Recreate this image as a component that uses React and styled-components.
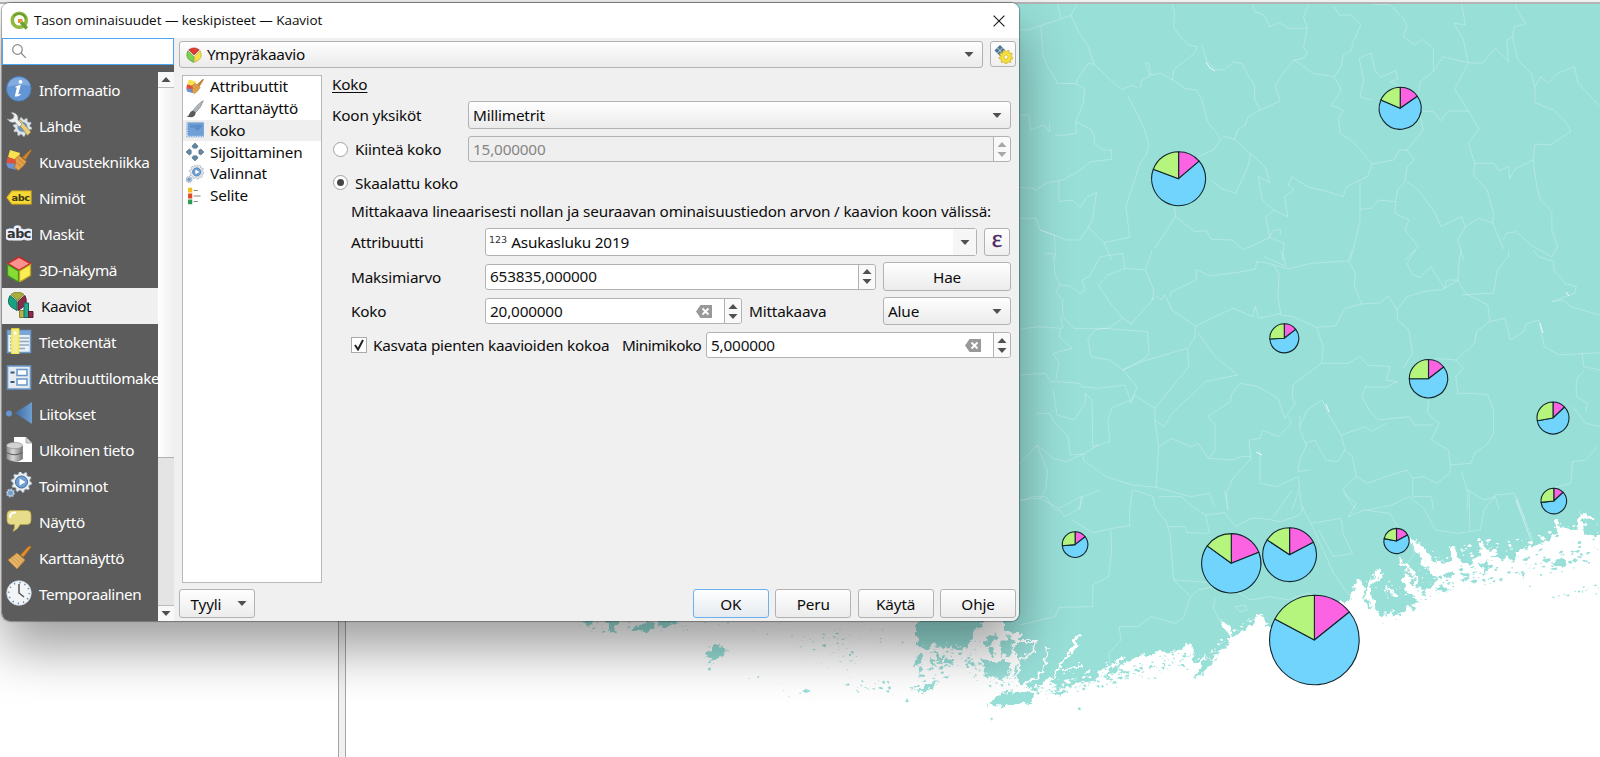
import React from 'react';
import styled, { createGlobalStyle, css } from 'styled-components';

const GlobalStyle = createGlobalStyle`
  * { box-sizing: border-box; }
  html, body { margin: 0; height: 100%; overflow: hidden; background: #fff; }
  body { font-family: "Noto Sans", "Open Sans", sans-serif; font-size: 15.3px; letter-spacing: -0.18px; color: #0c0c0c; }
`;

const Desktop = styled.div`
  position: relative;
  display: flex;
  flex-direction: column;
  width: 1600px;
  height: 757px;
  overflow: hidden;
`;
const TopStrip = styled.div`
  flex: none;
  height: 4px;
  background: #f0f0f0;
  border-bottom: 2px solid #b3b5b5;
`;
const Workspace = styled.div`
  flex: 1;
  min-height: 0;
  display: flex;
`;
const LayerPanel = styled.div`
  width: 338px;
  background: #fff;
`;
const Splitter = styled.div`
  width: 8px;
  background: #f0f0f0;
  border: solid #a5a5a5;
  border-width: 0 1px;
`;
const MapSvg = styled.svg`
  display: block;
  width: 1254px;
  height: 753px;
`;

const Dialog = styled.section`
  position: absolute;
  left: 2px;
  top: 3px;
  width: 1017px;
  height: 618px;
  display: flex;
  flex-direction: column;
  background: #f0f0f0;
  border-radius: 8px;
  overflow: hidden;
`;
const DialogShadow = styled.div`
  position: absolute;
  left: 2px;
  top: 3px;
  width: 1017px;
  height: 618px;
  border-radius: 8px;
  box-shadow: 0 28px 52px rgba(0, 0, 0, 0.38), 0 0 1px 1px rgba(0, 0, 0, 0.32);
`;
const TitleBar = styled.header`
  flex: none;
  height: 35px;
  display: flex;
  align-items: center;
  padding: 0 14px 0 8px;
  background: #fff;
  font-family: "Open Sans", sans-serif;
  font-size: 13.5px;
  letter-spacing: -0.04px;
  white-space: nowrap;
`;
const TitleText = styled.span`
  flex: 1;
  margin: -2px 0 0 5px;
`;
const DialogBody = styled.div`
  flex: 1;
  min-height: 0;
  display: flex;
`;

const Sidebar = styled.nav`
  width: 172px;
  display: flex;
  flex-direction: column;
  background: #5c5c5c;
`;
const SearchBox = styled.div`
  flex: none;
  height: 27px;
  display: flex;
  align-items: center;
  padding: 0 0 2px 8px;
  background: #fff;
  border: 1px solid #4aa5f3;
`;
const SidebarMain = styled.div`
  flex: 1;
  min-height: 0;
  display: flex;
  margin-top: 7px;
`;
const PageList = styled.ul`
  width: 156px;
  margin: 0;
  padding: 0;
  list-style: none;
  overflow: hidden;
  letter-spacing: -0.42px;
`;
const PageItem = styled.li`
  height: 36px;
  display: flex;
  align-items: center;
  gap: 7px;
  padding-left: ${(p) => (p.$selected ? 6 : 4)}px;
  white-space: nowrap;
  color: ${(p) => (p.$selected ? '#111' : '#fff')};
  background: ${(p) => (p.$selected ? '#f0f0f0' : 'transparent')};
  svg { flex: none; margin-bottom: 2px; }
`;
const ScrollBar = styled.div`
  width: 16px;
  display: flex;
  flex-direction: column;
  background: #e4e4e4;
`;
const ScrollButton = styled.div`
  height: 16px;
  display: flex;
  align-items: center;
  justify-content: center;
  background: #f8f8f8;
  border: solid #bcbcbc;
  border-width: ${(p) => (p.$end ? '1px 0 0' : '0 0 1px')};
`;
const ScrollThumb = styled.div`
  height: 370px;
  background: linear-gradient(90deg, #fff, #efefef);
  border-bottom: 1px solid #b0b0b0;
`;
const ScrollTrack = styled.div`
  flex: 1;
`;

const Content = styled.main`
  flex: 1;
  display: flex;
  flex-direction: column;
  padding: 3px 3px 3px 5px;
`;
const RendererRow = styled.div`
  flex: none;
  display: flex;
  gap: 7px;
  height: 27px;
`;
const fieldFrame = css`
  display: flex;
  align-items: center;
  border: 1px solid #b2b2b2;
  border-radius: 3px;
  white-space: nowrap;
`;
const Combo = styled.div`
  ${fieldFrame}
  width: ${(p) => p.$w}px;
  height: ${(p) => p.$h || 28}px;
  padding: 0 8px 0 ${(p) => p.$pad || 4}px;
  gap: 5px;
  background: ${(p) => (p.$editable ? '#fff' : 'linear-gradient(#fefefe, #ebebeb)')};
`;
const ComboText = styled.span`
  flex: 1;
  margin-top: -1px;
`;
const ComboArrowZone = styled.div`
  width: 23px;
  height: 100%;
  margin-right: -8px;
  display: flex;
  align-items: center;
  justify-content: center;
  background: #f6f6f6;
`;
const ToolButton = styled.div`
  ${fieldFrame}
  justify-content: center;
  width: ${(p) => p.$w || 26}px;
  height: ${(p) => p.$h || 28}px;
  background: linear-gradient(#fefefe, #efefef);
`;
const PushButton = styled.div`
  ${fieldFrame}
  justify-content: center;
  width: ${(p) => p.$w}px;
  height: 29px;
  background: ${(p) => (p.$default ? 'linear-gradient(#fefefe, #e4eaf0)' : 'linear-gradient(#fefefe, #ececec)')};
  border-color: ${(p) => (p.$default ? '#6bb1f0' : '#b2b2b2')};
`;
const SpinBox = styled.div`
  ${fieldFrame}
  width: ${(p) => p.$w}px;
  height: 26px;
  padding-left: 4px;
  color: ${(p) => (p.$disabled ? '#858585' : '#111')};
  background: ${(p) => (p.$disabled ? '#efefef' : '#fff')};
`;
const SpinValue = styled.span`
  flex: 1;
  margin-top: -1px;
`;
const SpinClear = styled.span`
  display: flex;
  margin-right: 12px;
`;
const SpinArrows = styled.div`
  width: 17px;
  height: 100%;
  display: flex;
  flex-direction: column;
  align-items: center;
  justify-content: center;
  gap: 5px;
  background: #f9f9f9;
  border-left: 1px solid #b2b2b2;
  border-radius: 0 3px 3px 0;
`;

const Columns = styled.div`
  flex: 1;
  min-height: 0;
  display: flex;
  padding: 7px 0 0 3px;
`;
const TabList = styled.ul`
  width: 140px;
  height: 508px;
  margin: 0;
  padding: 0;
  list-style: none;
  background: #fff;
  border: 1px solid #b9b9b9;
`;
const TabItem = styled.li`
  height: 21.75px;
  display: flex;
  align-items: center;
  gap: 6px;
  padding-left: 3px;
  background: ${(p) => (p.$selected ? '#efefef' : 'transparent')};
`;
const TabText = styled.span`
  margin-top: -1px;
`;
const Form = styled.div`
  flex: 1;
  padding-left: 10px;
`;
const FormRow = styled.div`
  display: flex;
  align-items: center;
  height: ${(p) => p.$h}px;
  margin-top: ${(p) => p.$gap || 0}px;
  padding-left: ${(p) => p.$indent || 0}px;
  white-space: nowrap;
`;
const Label = styled.label`
  width: ${(p) => (p.$w ? `${p.$w}px` : 'auto')};
  letter-spacing: ${(p) => (p.$ls ? `${p.$ls}px` : 'inherit')};
`;
const Heading = styled.span`
  margin-top: -3px;
  text-decoration: underline;
  text-underline-offset: 2px;
  text-decoration-thickness: 1px;
`;
const Gap = styled.span`
  width: ${(p) => p.$w}px;
`;
const Radio = styled.span`
  width: 15px;
  height: 15px;
  margin: 0 7px 0 1px;
  display: flex;
  align-items: center;
  justify-content: center;
  background: #fff;
  border: 1px solid #a2a2a2;
  border-radius: 50%;
  &::after {
    content: '';
    width: 7px;
    height: 7px;
    border-radius: 50%;
    background: ${(p) => (p.$checked ? '#444' : 'transparent')};
  }
`;
const CheckBox = styled.span`
  width: 16px;
  height: 16px;
  margin-right: 6px;
  display: flex;
  align-items: center;
  justify-content: center;
  background: #fff;
  border: 1px solid #aaa;
`;
const TypeTag = styled.span`
  font-family: "DejaVu Sans", sans-serif;
  font-size: 9.5px;
  letter-spacing: 0;
  margin: -5px -1px 0 -1px;
  color: #333;
`;
const Epsilon = styled.span`
  font-family: "Liberation Serif", serif;
  font-size: 25px;
  line-height: 20px;
  margin-top: -6px;
  color: #4c2a63;
  -webkit-text-stroke: 0.4px #4c2a63;
`;
const Footer = styled.footer`
  display: flex;
  gap: 6.4px;
  height: 29px;
`;
const Spacer = styled.span`
  flex: 1;
`;

/* ---------- small glyphs ---------- */

const Down = ({ c = '#505050' }) => (
  <svg width="10" height="5" viewBox="0 0 10 5"><path d="M.5 0h9L5 5z" fill={c} /></svg>
);
const Up = ({ c = '#505050' }) => (
  <svg width="10" height="5" viewBox="0 0 10 5"><path d="M.5 5h9L5 0z" fill={c} /></svg>
);
const Clear = () => (
  <svg width="16" height="13" viewBox="0 0 16 13">
    <path d="M0 6.5 4.5 0H16v13H4.5z" fill="#999" />
    <path d="m6.5 3.5 6 6m0-6-6 6" stroke="#fff" strokeWidth="1.8" />
  </svg>
);
const Spin = ({ w, value, disabled, clear }) => (
  <SpinBox $w={w} $disabled={disabled}>
    <SpinValue>{value}</SpinValue>
    {clear && <SpinClear><Clear /></SpinClear>}
    <SpinArrows>
      <Up c={disabled ? '#a8a8a8' : undefined} />
      <Down c={disabled ? '#a8a8a8' : undefined} />
    </SpinArrows>
  </SpinBox>
);

/* ---------- icons ---------- */

const gearPath = (cx, cy, ro, ri, n) => {
  const pts = [];
  for (let i = 0; i < n * 4; i += 1) {
    const a = ((i + 0.5) / (n * 4)) * Math.PI * 2;
    const r = i % 4 < 2 ? ro : ri;
    pts.push(`${(cx + r * Math.cos(a)).toFixed(2)},${(cy + r * Math.sin(a)).toFixed(2)}`);
  }
  return `M${pts.join('L')}z`;
};

const Brush = () => (
  <>
    <path d="m4 1 10 3-2 8-10-4z" fill="#f9e04f" />
    <path d="m1.500 8 10 3-1 6-10-3z" fill="#e0523c" />
    <path d="m0 14 10 1 1 6-9-2z" fill="#6a93cf" />
    <path d="m9 10 4-3.500 7.500 6-3 4.500-5 4.500-4-3q2-4 .5-8.500z" fill="#e3a24b" stroke="#a86a22" strokeWidth=".7" />
    <path d="m11.500 9 6.500 6M10.500 13l4.500 4.500" stroke="#b97a2c" strokeWidth=".8" />
    <path d="m16 8.500 8.500-8 1 1-6 9.500z" fill="#c98331" stroke="#9a5d18" strokeWidth=".5" />
  </>
);
const ActionGear = () => (
  <>
    <path d={gearPath(15.500, 10, 10.500, 8.500, 10)} fill="#eceff2" stroke="#8b98a5" strokeWidth=".8" />
    <circle cx="15.500" cy="10" r="6" fill="#6f9fd3" stroke="#3e6c9f" />
    <path d="m13.500 6.500 6 3.500-6 3.500z" fill="#fff" />
    <path d={gearPath(4.500, 21, 4.600, 3.600, 8)} fill="#c8d3de" stroke="#75879a" strokeWidth=".6" />
    <circle cx="4.500" cy="21" r="2.500" fill="#6f9fd3" />
  </>
);
const Cube = ({ flip }) => (flip ? (
  <>
    <path d="M13 13 4.500 4.500q8.500-6 17 0z" fill="#e23a33" stroke="#9c201c" />
    <path d="M3 6q-4.500 10 2.500 15l6.500 4V15z" fill="#7ed34d" stroke="#3f9522" />
    <path d="M23 6q4.500 10-2.500 15L14 25V15z" fill="#f5e045" stroke="#b9a11b" />
  </>
) : (
  <>
    <path d="m13 1 11.500 6.500L13 14.500 1.500 7.500z" fill="#fb9290" stroke="#c22a28" strokeWidth="1.500" />
    <path d="m1.500 8.500 11 6.500v11L1.500 19.500z" fill="#86dc35" stroke="#3c9420" strokeWidth="1.300" />
    <path d="m24.500 8.500-11 6.500v11l11-6.500z" fill="#fbee55" stroke="#c0a41c" strokeWidth="1.300" />
  </>
));

const icons = {
  info: (
    <>
      <circle cx="12.800" cy="12.800" r="12.300" fill="#6495d4" stroke="#4d7fbd" />
      <path d="M2 11a11 9 0 0 1 22-1q-11-3-22 1z" fill="#82abdf" />
      <circle cx="14.500" cy="5.800" r="1.900" fill="#fff" />
      <path d="M9.500 10.500q3-1 5.300-1.400l-2.600 9.400 2.400-.8v1.300q-3.300 2-5.800 1.400l2-8.800-1.300-.1z" fill="#fff" />
    </>
  ),
  source: (
    <>
      <path d={gearPath(16.500, 15, 9.500, 7.500, 10)} fill="#dfe4ea" stroke="#9aa5b0" strokeWidth=".6" />
      <circle cx="16.500" cy="15" r="5" fill="#6c97cb" />
      <path d="m11 10 3-2.500L25 20l-3.500 3.500z" fill="#e8cf7f" stroke="#8e7a37" strokeWidth=".7" />
      <path d="M1 7q4 5 8 3l4 5 3-3-4-4q1-6-5-7.500L5 .5l3 3-1 3-3 1z" fill="#eef0f1" stroke="#8b9093" strokeWidth=".7" />
    </>
  ),
  brush: <g transform="translate(0 1)"><Brush /></g>,
  label: (
    <>
      <path d="M1 13.500 6 7h19v13H6z" fill="#f6d935" stroke="#e0b71f" strokeWidth="1.200" />
      <text x="5.500" y="17" fontFamily="DejaVu Sans" fontWeight="700" fontSize="8.600" fill="#3c3510" textLength="18" lengthAdjust="spacingAndGlyphs">abc</text>
    </>
  ),
  mask: (
    <text x="1" y="17.500" fontFamily="DejaVu Sans" fontWeight="700" fontSize="12.500" fill="#333" stroke="#e9eefa" strokeWidth="5" strokeLinejoin="round" paintOrder="stroke" textLength="24" lengthAdjust="spacingAndGlyphs">abc</text>
  ),
  cube: <Cube />,
  diagram: (
    <>
      <path d="m9.500 8.500-6.500-6q6.500-5 13 0z" fill="#a9ad3c" stroke="#7f8428" />
      <path d="M2 3.500q-4 8 2 12l5 3V9.500z" fill="#16a381" stroke="#0d6d59" />
      <path d="M17 3.500q3.500 8-2.500 12l-4.500 3V9.500z" fill="#8a2d49" stroke="#5f1b32" />
      <path d="M11.500 18.500h5v7h-5z" fill="#b8b546" stroke="#858327" />
      <path d="M16 11h4.500v14.500H16z" fill="#26a993" stroke="#156b60" />
      <path d="M20.500 19.500h4.500v6h-4.500z" fill="#8a2d49" stroke="#5f1b32" />
    </>
  ),
  fields: (
    <>
      <path d="M1.500 2.500h23v22h-23z" fill="#eaf1f8" stroke="#6a96ca" strokeWidth="1.500" />
      <path d="M2 3h22v4H2z" fill="#7ba6d8" />
      <path d="M4 10h19M4 13.500h19M4 17h19M4 20.500h15" stroke="#93a9bf" strokeWidth="1.300" />
      <path d="M6 1h6.500v25H6z" fill="#f1eaa5" stroke="#f7ee3d" strokeWidth="1.700" />
      <circle cx="9.200" cy="5" r="1.500" fill="#fff" />
    </>
  ),
  form: (
    <>
      <path d="M1.500 2h23v23h-23z" fill="#e6ebef" stroke="#6a96ca" strokeWidth="1.600" />
      <path d="M4.500 8.500h4M4.500 18h4" stroke="#38597c" strokeWidth="2" />
      <path d="M11 5.500h10v6H11zM11 15h10v6H11z" fill="#fff" stroke="#6a96ca" strokeWidth="1.500" />
    </>
  ),
  join: (
    <>
      <defs><linearGradient id="join"><stop stopColor="#3f6ca3" /><stop offset="1" stopColor="#6e9ed2" /></linearGradient></defs>
      <path d="M26 2v22L9 13z" fill="url(#join)" />
      <circle cx="3" cy="13.500" r="3" fill="#6495cf" />
    </>
  ),
  storage: (
    <>
      <path d="M8 1h12l6 6v19H8z" fill="#fff" />
      <path d="M20 1v6h6z" fill="#d3d3d3" stroke="#888" strokeWidth=".6" />
      <defs><linearGradient id="cyl"><stop stopColor="#8b8b8b" /><stop offset=".4" stopColor="#d9d9d9" /><stop offset="1" stopColor="#757575" /></linearGradient></defs>
      <path d="M.5 10v13q8 5 16 0V10z" fill="url(#cyl)" stroke="#6d6d6d" strokeWidth=".6" />
      <path d="M.5 16.500q8 4.500 16 0" fill="none" stroke="#595959" />
      <ellipse cx="8.500" cy="9.500" rx="8" ry="3.200" fill="#d2d2d2" stroke="#858585" strokeWidth=".6" />
    </>
  ),
  actions: <ActionGear />,
  display: (
    <>
      <path d="M5 2.500h16q4 0 4 4v6q0 4-4 4h-7q-2 5-7 7 2-4 1.500-7H5q-4 0-4-4v-6q0-4 4-4z" fill="#e7dc8a" stroke="#b7a548" strokeWidth=".8" />
      <path d="M4 9q0-4 5-4.500" fill="none" stroke="#fff" strokeWidth="2" strokeLinecap="round" />
    </>
  ),
  broom: (
    <>
      <path d="M14.500 11 22 3q3-2 3 0l-7.500 10z" fill="#e0912a" stroke="#b36a12" strokeWidth=".7" />
      <path d="m2 16 9-7 8 7-8 9z" fill="#e5b468" stroke="#b77e2c" strokeWidth=".8" />
      <path d="m9 10.500 9 8M7 12l8 8M5 14l8 8" stroke="#c98c3c" strokeWidth=".7" />
    </>
  ),
  clock: (
    <>
      <circle cx="13" cy="13" r="12.300" fill="#f2f4f6" stroke="#ccd2d8" strokeWidth=".7" />
      <circle cx="13" cy="13" r="10.300" fill="none" stroke="#5e87ba" strokeWidth="1.700" strokeDasharray="1.200 4.193" />
      <path d="M13 4v9l5 4" fill="none" stroke="#555" strokeWidth="1.500" />
    </>
  ),
  variables: <circle cx="13" cy="14" r="7" fill="#74307a" />,
  cubeRound: <Cube flip />,
  paint: (
    <>
      <path d="M25 1q-3 1-9 7l-6 7 4 3Q22 11 25 1z" fill="#aeb4b8" stroke="#6d7478" strokeWidth=".7" />
      <path d="M10 15q-4 1-5 5-1 3-4 4 8 2 11-1 2-2 2-5z" fill="#555b5e" />
    </>
  ),
  size: (
    <>
      <path d="M1 2h25v21H1z" fill="#6f9fd6" stroke="#9cb8d6" />
      <path d="M6 5q7 2 10 0l8 1-4 6-5 2-3-5-5 1z" fill="#5c8dc6" />
      <path d="M1.500 2v20.500H26" fill="none" stroke="#d3e2f2" strokeWidth="2.500" strokeDasharray="2 1.500" />
    </>
  ),
  move: (
    <g fill="#6487a5" stroke="#3c5c78" strokeWidth=".7">
      <path d="m13 0 4.500 4.500-2 3h-5l-2-3zM13 26l4.500-4.500-2-3h-5l-2 3zM0 13l4.500-4.500 3 2v5l-3 2zM26 13l-4.500-4.500-3 2v5l3 2z" />
    </g>
  ),
  legend: (
    <>
      <path d="M3 1h6v7H3z" fill="#f7bd1c" /><path d="M3 9.500h6v7H3z" fill="#dd4a25" /><path d="M3 18h6v7H3z" fill="#2c9b52" />
      <path d="M11 5h6M11 13h10M11 21h6" stroke="#888" strokeWidth="1.600" />
    </>
  ),
};
const Icon = ({ name, size = 26 }) => (
  <svg width={size} height={size} viewBox="0 0 26 26">{icons[name]}</svg>
);

const QgisLogo = () => (
  <svg width="19" height="19" viewBox="0 0 19 19">
    <circle cx="9.300" cy="9.300" r="7" fill="none" stroke="#8fb93c" strokeWidth="3.600" />
    <path d="M4 5A7 7 0 0 1 16 8" fill="none" stroke="#5c9330" strokeWidth="1.200" />
    <path d="m11 11 5.800 6.500" stroke="#6da12f" strokeWidth="3.400" />
    <path d="M8 8h4.500v1.500l-3 2.500H8z" fill="#ee8f2d" />
  </svg>
);
const CloseIcon = () => (
  <svg width="12" height="12" viewBox="0 0 12 12"><path d="m.6.6 10.800 10.800m0-10.800L.6 11.400" stroke="#222" strokeWidth="1.200" /></svg>
);
const SearchIcon = () => (
  <svg width="16" height="16" viewBox="0 0 16 16" fill="none" stroke="#888" strokeWidth="1.200">
    <circle cx="6.500" cy="6.500" r="4.800" /><path d="m10 10 4.800 4.800" />
  </svg>
);
const AutoIcon = () => (
  <svg width="19" height="19" viewBox="0 0 19 19">
    <path d="m6 0 5.500 5.500L6 11 .5 5.500z" fill="#4f7492" />
    <path d="m3.200 2.800 5.500 5.500M8.700 2.800 3.200 8.300" stroke="#d5e4f0" strokeWidth=".9" />
    <path d={gearPath(12, 12, 7, 5.300, 9)} fill="#f5df3c" stroke="#c9ab1b" strokeWidth=".7" />
    <circle cx="12" cy="12" r="2" fill="#fffbe0" stroke="#c9ab1b" strokeWidth=".6" />
  </svg>
);
const Check = () => (
  <svg width="12" height="12" viewBox="0 0 12 12"><path d="m2 6 3 4.500L10 1" fill="none" stroke="#222" strokeWidth="2" /></svg>
);

/* ---------- map ---------- */

const pies = [
  [1400.2, 108.3, 21, 55, 293.5], [1178.6, 178.7, 27, 49.6, 290.4], [1284.3, 338.3, 14.5, 52, 267],
  [1428.5, 378.7, 19.2, 52.4, 270], [1553, 418, 16, 46.6, 260], [1553.8, 501, 12.8, 47, 264],
  [1075.1, 544.6, 12.8, 52, 265], [1396.5, 541, 12.6, 61.5, 281], [1289.6, 554.7, 26.9, 62.6, 303.5],
  [1231.3, 563.3, 29.7, 68, 306], [1314.4, 640, 44.8, 51.3, 298],
];
const Pie = ({ d: [cx, cy, r, a, b] }) => {
  const at = (deg) => {
    const t = (deg * Math.PI) / 180;
    return [cx + r * Math.sin(t), cy - r * Math.cos(t)];
  };
  const slice = (s, e, fill) => {
    const [x1, y1] = at(s);
    const [x2, y2] = at(e);
    return <path d={`M${cx} ${cy}L${x1} ${y1}A${r} ${r} 0 ${e - s > 180 ? 1 : 0} 1 ${x2} ${y2}z`} fill={fill} />;
  };
  return (
    <g stroke="#12262c" strokeWidth="1.100" strokeLinejoin="round">
      {slice(0, a, '#fb63e3')}
      {slice(a, b, '#71d4fd')}
      {slice(b, 360, '#b5f57e')}
    </g>
  );
};

const bordersNorth = [
  'M26 90 48 90 82 77 162 46 178 12M127 12 135 53M162 46 180 90 208 140 223 193 296 269 325 256 340 265M82 77 88 165 98 195 122 240 124 250 175 251 178 240 208 190 223 193M175 251 198 265 195 310 175 365 176 400 145 406 120 405',
  'M175 365 215 388 223 405 225 432 248 450 270 450 270 478 215 485 180 515 140 540 100 548 68 570 60 565 26 562M130 543 130 605 165 600 187 622 205 590 230 578 220 655 208 682 250 728 318 712 308 620 325 560 345 490 360 468 370 435 357 388 340 345 313 288',
  'M430 12 437 35 435 82 452 110 475 135 498 140 490 160 468 180 450 195 435 210 432 240 400 220 375 225 368 187 360 190 372 228 350 240 345 265M432 240 465 265 495 270 510 300 520 345 528 370 550 400 560 420 540 450 500 470',
  'M510 135 522 180 545 208 570 210 595 185 618 192 635 232 650 255 650 300 665 330 633 350 625 375 605 390 597 418 640 463 632 500 600 580 560 565 535 540M597 418 565 408M665 330 718 303 705 258 725 220 755 180 780 175 790 158 780 140 790 85 740 85 715 68 690 80 675 45 650 35 645 12M790 85 780 50 795 12',
  'M755 180 805 220 862 230 880 200 885 165 908 152 910 130 932 75 905 45 875 45 862 20M862 230 880 268 870 290 853 315 885 330 873 360 878 400 912 425 962 492 1020 480 1035 450 1055 450 1098 390 1085 320',
  'M962 492 950 530 895 560 885 590 845 575 790 560 748 530 740 555 755 570 730 590 738 650 700 630 670 600 660 530 690 548 680 505 660 480 640 463M930 545 930 665 905 780M930 628 960 625 980 600 1025 605 1030 570 1050 545 1055 500 1075 480 1055 450',
  'M965 12 1010 15 1045 55 1055 80 1045 110 1075 135 1095 118 1125 145 1125 215 1090 245 1085 290M960 300 930 290 940 240 928 175 960 160 970 210 985 232 1025 212 1030 238 1010 245 1045 262',
  'M1125 215 1150 170 1218 188 1182 268 1218 333 1247 387 1218 430 1235 490 1285 490 1300 512 1325 500 1328 535 1345 505 1390 480 1395 432 1435 435 1490 395 1480 370 1445 330 1395 308 1395 260 1410 230 1430 250 1455 220 1500 200 1510 250 1568 320',
  'M1180 70 1210 75 1200 10M1180 70 1205 120 1218 188 1255 190 1290 145 1325 185 1320 120 1335 110 1340 80 1370 72 1345 25 1345 12M1335 110 1350 180 1385 220 1395 260M1095 333 1125 335 1145 362 1165 333 1218 333',
  'M1055 545 1085 570 1130 640 1145 680 1200 650 1210 680 1245 655 1283 670 1312 748M1235 490 1232 525 1268 570 1285 640 1283 670M1390 480 1400 560 1410 600 1440 635 1440 690 1455 740 1440 770 1390 740 1345 695 1320 700 1310 720M1210 680 1190 720 1205 780M1025 605 1022 640 1060 660 1050 690 1085 740 1050 780',
  'M437 620 440 650 385 745M440 650 490 695 522 692 535 718 590 720 620 750 690 712 728 730 725 780M690 712 680 650 700 630M690 712 700 690 720 690 718 705M26 655 70 655 80 690 118 705 122 780M80 690 150 720 185 720 208 682M250 728 270 780M26 345 50 345 55 390 90 375 105 395 105 370',
];
const bordersMid = [
  'M95 12 115 10 120 75 133 105 122 125 140 150 140 200 170 235 260 235 300 205 270 165 235 105 260 75 305 55 300 10M133 105 160 108 185 130 200 120 192 90 212 78 240 20 300 10M305 55 360 60 378 0M360 60 382 120 378 150 322 222 300 205M378 150 390 138 402 150 412 135 425 165 430 180 493 228 490 265 472 295 475 350 385 475 385 510 395 590 388 712',
  'M425 140 430 125 495 90 495 58 530 78 600 68 652 58 655 35 680 38 740 57 800 40 900 32 918 70 915 110 935 162 890 175 865 228 815 232 752 200 720 195 712 140 715 70 700 45M493 228 592 175 645 200 652 168 660 205 692 198 720 190M500 250 545 320 605 375 520 395 430 490 410 530 385 510',
  'M675 20 735 50 720 0M900 32 908 0M935 162 985 158 1005 138 1028 178 1030 210 1060 240 1070 310 1045 355M1028 178 1055 140 1100 125 1150 118 1190 90 1160 90 1155 115 1118 50 1090 82 1070 75 1055 40 1078 0M1190 90 1195 20 1200 0M1190 90 1210 130 1270 165 1275 215 1315 205 1330 270 1365 245 1372 222 1405 210 1420 290 1460 315 1568 308',
  'M1200 135 1265 130 1285 130 1295 60 1325 20 1325 0M1275 215 1240 245 1235 280 1185 330 1130 325M1185 330 1205 355 1185 380 1190 430 1230 430 1270 435 1285 480 1285 550 1270 580 1235 610 1225 640 1170 645 1165 600 1120 570 1140 520 1110 490 1112 450',
  'M1390 0 1405 20 1445 35 1445 60 1475 100 1505 110 1500 130 1440 155 1470 150 1490 170 1568 195M1520 308 1525 350 1568 360M1525 360 1505 390 1505 440 1535 460 1530 485M1495 470 1530 520 1568 530M1560 590 1530 630 1495 635 1490 700 1450 712',
  'M815 232 832 290 828 340 780 380 752 405 750 440 758 460 730 505 712 445 660 410 612 400 590 430 585 455 525 500 545 525 545 600 528 625 590 630 615 620 640 620M828 340 900 340 930 318 950 345 1010 350 1000 390 1030 395 1000 412 945 410 935 440 960 490 980 510 1060 500 1075 525 1125 525',
  'M740 500 748 520 712 560 670 540 665 565 635 570 640 625 590 690 575 730 578 780M770 495 770 540 788 585 770 630 765 665 795 660M785 580 810 570 840 630 870 635 890 600 880 555 845 490 830 450 790 480 770 530M880 555 920 540 945 530 960 545 1000 520M890 600 910 620 920 680 885 715 900 750 920 780M920 680 950 700 995 682 1055 660 1070 685 1100 680 1135 700 1170 668 1170 645',
  'M26 238 75 230 135 235 130 260 165 295 115 310 130 340 122 390M135 200 140 235M205 270 225 240 250 235 365 245 370 310 360 325 300 360 265 330 215 320 208 270M300 360 350 335 470 295M300 360 338 410 320 460 330 435 385 475M26 375 95 370 108 395 125 395 185 400 190 410 235 415 305 405 320 450 270 475 260 510 265 575 220 590 218 450 200 430 200 460 170 510 125 495 115 420',
  'M70 490 105 490 120 520 155 560 160 615 195 612 235 585M26 640 72 585 115 625 150 635 195 612 195 630 255 680 325 705 388 712 480 740 530 730 545 770M72 585 100 665 95 720 80 745 26 750M80 745 130 775 190 740 185 780M395 590 430 565 480 590 500 580 528 625M664 600 665 700 710 710 765 680 770 710 750 780M1200 665 1215 720 1215 780M1215 720 1260 750 1290 740 1300 780M1070 685 1070 740 1120 740 1125 780',
];
const bordersSouth = [
  'M26 35 60 20 95 20 120 60 132 60 145 80 185 55 192 20 240 0M165 90 220 128 285 112 318 108 318 60 325 0M268 120 270 180 262 260 220 285 220 350 130 352 120 380 26 405M330 0 380 20 385 50 415 95 425 130 435 270 480 320 460 385 440 400 375 380 340 410 290 410 295 450 262 490 265 520',
  'M395 20 455 20 485 50 520 75 530 130 470 128 465 110 420 110M520 75 570 68 600 110 640 85 670 85M570 0 580 60M670 85 720 95 770 75 780 50M750 0 700 80M770 0 775 50 800 100 880 85 885 130 910 190 860 200 820 120M885 10 920 40 900 80 940 60 1010 70 1040 130M800 100 860 250 900 315M435 270 560 280 640 330 690 320 740 330 790 310 850 330M480 320 500 300 540 290M540 355 560 395M540 355 545 325',
  'M600 350 625 345 630 360 610 365 600 350M950 60 1015 45 1060 20 1100 55 1130 120 1190 130 1222 125 1220 0M1065 150 1075 190 1050 230M1222 125 1250 120 1260 60 1290 15 1340 10 1390 150M1345 20 1370 90',
];

const rng = (seed) => {
  let s = seed;
  return () => {
    s = (s * 16807) % 2147483647;
    return s / 2147483647;
  };
};
/* Small irregular blobs scattered along a segment, used for skerries and bays. */
const blobs = (seed, count, x1, y1, x2, y2, spread, size) => {
  const r = rng(seed * 7919);
  let d = '';
  for (let i = 0; i < count; i += 1) {
    const t = r();
    const off = (r() + r() - 1) * spread;
    const x = x1 + (x2 - x1) * t + (r() - 0.5) * 6;
    const y = y1 + (y2 - y1) * t + off;
    const k = size * (0.3 + r() * r() * 1.3);
    d += `M${(x - k).toFixed(1)} ${y.toFixed(1)}l${(k * r() + 0.2).toFixed(1)} ${(-k * r()).toFixed(1)} ${(k * 0.9).toFixed(1)} ${(-k * 0.3 * r()).toFixed(1)} ${(k * 0.4).toFixed(1)} ${(k * r()).toFixed(1)} ${(-k * r()).toFixed(1)} ${(k * 0.7).toFixed(1)}z`;
  }
  return d;
};

const seaPath = 'M320 616H917L917 645 928 649 935 644 948 648 962 650 972 641 972 632 984 621 1004 621 1010 630 1021 636 1013 650 1020 661 1012 672 1022 685 1030 688 1033 690 1000 694 987 706 1020 704 1033 703 1032 690 1046 681 1060 688 1072 686 1092 682 1100 671 1113 674 1126 662 1140 657 1153 654 1172 652 1186 648 1190 643 1195 651 1193 662 1200 663 1207 651 1200 670 1193 677 1200 675 1212 663 1220 652 1226 646 1233 638 1244 630 1250 626 1258 614 1266 621 1275 640 1330 610 1340 602 1350 600 1355 585 1358 580 1365 583 1363 597 1367 607 1377 613 1383 617 1393 607 1407 606 1417 600 1407 590 1402 582 1407 574 1412 582 1418 588 1425 590 1436 586 1437 580 1431 573 1425 565 1417 552 1412 543 1409 539 1417 542 1427 552 1437 562 1447 563 1453 560 1453 549 1459 560 1463 570 1473 560 1481 557 1480 540 1487 550 1496 549 1498 555 1490 558 1500 560 1508 555 1512 560 1517 553 1527 548 1543 543 1558 535 1556 522 1563 528 1577 530 1579 515 1583 523 1584 532 1630 545V790H320z';

const MapView = () => (
  <MapSvg viewBox="346 4 1254 753">
    <defs>
      <filter id="ragged" x="310" y="480" width="1340" height="320" filterUnits="userSpaceOnUse">
        <feTurbulence type="fractalNoise" baseFrequency="0.16" numOctaves="3" seed="7" />
        <feDisplacementMap in="SourceGraphic" scale="10" xChannelSelector="R" yChannelSelector="G" />
      </filter>
    </defs>
    <path d="M346 4h1254v753H346z" fill="#98dfd8" />
    <g fill="none" stroke="#fff" strokeOpacity=".26" strokeWidth="1" strokeLinejoin="round">
      {[[bordersNorth, 0], [bordersMid, 250], [bordersSouth, 490]].map(([set, y]) => (
        <g key={y} transform={`translate(1010 ${y}) scale(.3763 .3333)`}>
          {set.map((d) => <path key={d.slice(0, 14)} d={d} vectorEffect="non-scaling-stroke" />)}
        </g>
      ))}
      <path strokeOpacity=".8" d="m1206 62 4 6 5 3M1540 323l3 10M1326 404l3 8M1256 452l6 3M1566 292l3 4" />
      <path strokeOpacity=".5" d="m1516 500 15 40" />
    </g>
    <g filter="url(#ragged)">
      <path d={seaPath} fill="#fff" />
      <g fill="none" stroke="#fff" strokeLinecap="round" strokeLinejoin="round">
        <path strokeWidth="2" d="M1048 648q-2 20-10 28l-16 11M1079 635l-5 12-10 14-10 14-14 14M1062 672l20-8M1036 641l-18 0-6 9M1036 641l-4 12-14 8M1020 662l-6 20" />
        <path strokeWidth="4" d="m1077 638-5 12" />
        <path strokeWidth="3" d="m1222 622 8 10 4 14M1100 674l24-16M1120 668l24-12M1187 645v10l-8 6" />
        <path strokeWidth="3" d="M1355 600 1358 582M1367 600l1-12 6-10 5-8 1 8-8 3M1368 588l8 22" />
        <path strokeWidth="5" d="M1356 598l-8 6M1370 596l4 14M1406 575l2 16" />
        <path strokeWidth="2.500" d="M1384 584l6 9 8 1M1399 559l12 12 6 10v9M1411 539l5 4 8 12 10 8" />
        <path strokeWidth="4" d="M1592 519l-9-4M1580 515l1 14M1557 522l2 12M1453 549l6 16M1481 541l5 12" />
        <path strokeWidth="7" d="m1424 553 10 14 12 10M1450 566l22 2" />
      </g>
      <g fill="#98dfd8">
        <path d="m983 660 10 2 10-2 7 4-1 12-10 4-12-3-4-8zM1000 644l8-8 6 4-4 13-8 4zM986 637l8-3 2 5-5 6-6 1zM988 649l6-2 2 7-6 3zM975 624l8 0-4 6zM1005 622l12 6-2 6-10-3zM918 655l5 3-2 7-6 1zM928 656l6 2 2 9-6-2zM936 651l8 6-3 6-6-4zM946 655l8 5-2 8-7-5zM917 668l8 4-6 3zM920 688l12-5 6-3-2 5-10 6-8 2z" />
        <path d="m584 620 10-1-2 6-5 2zM606 620h14l-6 9-2 4zM631 630l8-6 10-3 6 6-8 5-9-1zM658 624l8-5 15-1-8 8-8 2zM706 653l6-3 3-6 6 2 6 5-6 5-6 5-5-1-4-3z" />
        <path d="m1048 694 12-4 8 2-8 4zM1390 607l10-4 10 1-6 8-10 3zM1555 562l6-6 4 6-3 6zM1520 571l5 4-2 3zM1480 565l7-4 5 5-7 6zM1442 575l9-4 4 4-7 6z" />
      </g>
    </g>
    <g fill="#98dfd8">
      <path d={blobs(11, 110, 1035, 690, 1130, 675, 11, 2.4)} />
      <path d={blobs(21, 80, 1120, 675, 1200, 655, 14, 1.8)} />
      <path d={blobs(31, 55, 912, 690, 955, 650, 26, 2.2)} />
      <path d={blobs(41, 45, 960, 660, 985, 660, 24, 1.8)} />
      <path d={blobs(51, 40, 990, 680, 1025, 680, 9, 1.8)} />
      <path d={blobs(61, 70, 1385, 615, 1470, 575, 13, 2.3)} />
      <path d={blobs(71, 100, 1460, 578, 1598, 550, 17, 2.5)} />
      <path d={blobs(81, 22, 1555, 596, 1600, 590, 7, 1.3)} />
      <path d={blobs(91, 24, 704, 660, 722, 650, 14, 1.6)} />
      <path d={blobs(101, 34, 800, 640, 860, 658, 26, 1.7)} />
      <path d={blobs(111, 22, 840, 686, 900, 688, 8, 1.7)} />
      <path d={blobs(121, 40, 700, 625, 905, 640, 18, 1.1)} />
      <path d={blobs(131, 40, 580, 624, 690, 626, 10, 1.5)} />
      <path d={blobs(141, 14, 715, 680, 810, 694, 12, 1.1)} />
      <path d="m802 691 4-2 5 2-5 2zM1078 708l2-1 1 3-3 0zM990 718l3 0-1 3zM905 702l2-4 2 4zM1529 587l1-2 1 2z" />
    </g>
    <g fill="#fff">
      <path d={blobs(201, 60, 1350, 600, 1440, 575, 15, 1.4)} />
      <path d={blobs(211, 90, 1425, 562, 1600, 528, 13, 2)} />
      <path d={blobs(221, 70, 1060, 682, 1185, 652, 9, 1.8)} />
      <path d={blobs(231, 40, 1195, 665, 1255, 620, 7, 1.6)} />
      <path d={blobs(241, 30, 918, 648, 975, 645, 7, 1.3)} />
    </g>
    {pies.map((d) => <Pie key={d[0]} d={d} />)}
  </MapSvg>
);

const pages = [
  ['info', 'Informaatio'], ['source', 'Lähde'], ['brush', 'Kuvaustekniikka'], ['label', 'Nimiöt'],
  ['mask', 'Maskit'], ['cube', '3D-näkymä'], ['diagram', 'Kaaviot'], ['fields', 'Tietokentät'],
  ['form', 'Attribuuttilomake'], ['join', 'Liitokset'], ['storage', 'Ulkoinen tieto'],
  ['actions', 'Toiminnot'], ['display', 'Näyttö'], ['broom', 'Karttanäyttö'], ['clock', 'Temporaalinen'],
  ['variables', ''],
];
const tabs = [
  ['brush', 'Attribuuttit'], ['paint', 'Karttanäyttö'], ['size', 'Koko'], ['move', 'Sijoittaminen'],
  ['actions', 'Valinnat'], ['legend', 'Selite'],
];

export default function App() {
  return (
    <Desktop>
      <GlobalStyle />
      <TopStrip />
      <Workspace>
        <LayerPanel />
        <Splitter />
        <MapView />
      </Workspace>
      <DialogShadow />
      <Dialog>
        <TitleBar>
          <QgisLogo />
          <TitleText>Tason ominaisuudet — keskipisteet — Kaaviot</TitleText>
          <CloseIcon />
        </TitleBar>
        <DialogBody>
          <Sidebar>
            <SearchBox><SearchIcon /></SearchBox>
            <SidebarMain>
              <PageList>
                {pages.map(([icon, text]) => (
                  <PageItem key={icon} $selected={icon === 'diagram'}>
                    <Icon name={icon} />
                    {text}
                  </PageItem>
                ))}
              </PageList>
              <ScrollBar>
                <ScrollButton><Up /></ScrollButton>
                <ScrollThumb />
                <ScrollTrack />
                <ScrollButton $end><Down /></ScrollButton>
              </ScrollBar>
            </SidebarMain>
          </Sidebar>
          <Content>
            <RendererRow>
              <Combo $w={804} $h={27} $pad={6}>
                <Icon name="cubeRound" size={16} />
                <ComboText>Ympyräkaavio</ComboText>
                <Down />
              </Combo>
              <ToolButton $h={26}><AutoIcon /></ToolButton>
            </RendererRow>
            <Columns>
              <TabList>
                {tabs.map(([icon, text]) => (
                  <TabItem key={icon} $selected={icon === 'size'}>
                    <Icon name={icon} size={18} />
                    <TabText>{text}</TabText>
                  </TabItem>
                ))}
              </TabList>
              <Form>
                <FormRow $h={21}><Heading>Koko</Heading></FormRow>
                <FormRow $h={28} $gap={5}>
                  <Label $w={136}>Koon yksiköt</Label>
                  <Combo $w={543}><ComboText>Millimetrit</ComboText><Down /></Combo>
                </FormRow>
                <FormRow $h={26} $gap={7}>
                  <Radio />
                  <Label $w={113}>Kiinteä koko</Label>
                  <Spin w={543} value="15,000000" disabled />
                </FormRow>
                <FormRow $h={21} $gap={10}>
                  <Radio $checked />
                  <Label>Skaalattu koko</Label>
                </FormRow>
                <FormRow $h={22} $gap={7} $indent={19}>
                  <Label>Mittakaava lineaarisesti nollan ja seuraavan ominaisuustiedon arvon / kaavion koon välissä:</Label>
                </FormRow>
                <FormRow $h={28} $gap={6} $indent={19}>
                  <Label $w={134}>Attribuutti</Label>
                  <Combo $w={492} $editable>
                    <TypeTag>123</TypeTag>
                    <ComboText>Asukasluku 2019</ComboText>
                    <ComboArrowZone><Down /></ComboArrowZone>
                  </Combo>
                  <Gap $w={7} />
                  <ToolButton><Epsilon>ε</Epsilon></ToolButton>
                </FormRow>
                <FormRow $h={29} $gap={6} $indent={19}>
                  <Label $w={134}>Maksimiarvo</Label>
                  <Spin w={391} value="653835,000000" />
                  <Gap $w={7} />
                  <PushButton $w={128}>Hae</PushButton>
                </FormRow>
                <FormRow $h={28} $gap={6} $indent={19}>
                  <Label $w={134}>Koko</Label>
                  <Spin w={257} value="20,000000" clear />
                  <Gap $w={7} />
                  <Label $w={134}>Mittakaava</Label>
                  <Combo $w={128}><ComboText>Alue</ComboText><Down /></Combo>
                </FormRow>
                <FormRow $h={26} $gap={7} $indent={19}>
                  <CheckBox><Check /></CheckBox>
                  <Label $w={249} $ls={-0.24}>Kasvata pienten kaavioiden kokoa</Label>
                  <Label $w={84} $ls={-0.5}>Minimikoko</Label>
                  <Spin w={305} value="5,000000" clear />
                </FormRow>
              </Form>
            </Columns>
            <Footer>
              <PushButton $w={76}>
                <Gap $w={4} />Tyyli<Gap $w={16} /><Down />
              </PushButton>
              <Spacer />
              <PushButton $w={76} $default>OK</PushButton>
              <PushButton $w={76}>Peru</PushButton>
              <PushButton $w={76}>Käytä</PushButton>
              <PushButton $w={76}>Ohje</PushButton>
            </Footer>
          </Content>
        </DialogBody>
      </Dialog>
    </Desktop>
  );
}
